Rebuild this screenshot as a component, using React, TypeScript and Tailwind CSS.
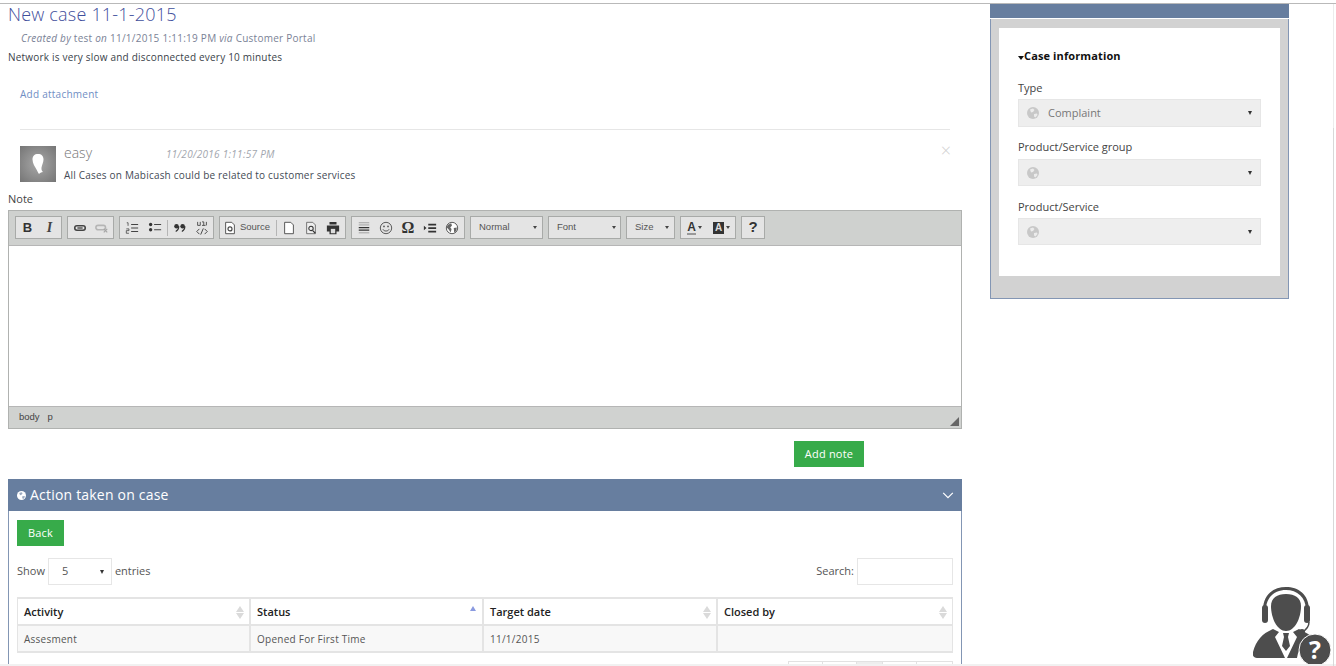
const font = "font-['Open_Sans',sans-serif]";

function Globe({ className, detail = "#ffffff" }: { className: string; detail?: string }) {
  return (
    <svg viewBox="0 0 12 12" className={className}>
      <circle cx="6" cy="6" r="6" fill="currentColor" />
      <path d="M3 2.500 6 1.500 7.500 3 6 5 4 5.500 3.500 4ZM7 7 10 6.500 10.500 8 8.500 10.500 7 9.500Z" fill={detail} opacity="0.65" />
    </svg>
  );
}

function Caret() {
  return <span className="h-0 w-0 border-x-[2.5px] border-t-[4px] border-x-transparent border-t-[#333]" />;
}

function SortArrows({ up }: { up?: boolean }) {
  if (up) {
    return <span className="mr-[1px] mt-[-8px] h-0 w-0 border-x-[3.5px] border-b-[5px] border-x-transparent border-b-[#8a9ae0]" />;
  }
  return (
    <span className="flex flex-col gap-[1px]">
      <span className="h-0 w-0 border-x-[4px] border-b-[6px] border-x-transparent border-b-[#dadada]" />
      <span className="h-0 w-0 border-x-[4px] border-t-[6px] border-x-transparent border-t-[#dadada]" />
    </span>
  );
}

function Tool({ children, w = "w-[22px]" }: { children: React.ReactNode; w?: string }) {
  return <span className={`flex h-full items-center justify-center ${w}`}>{children}</span>;
}

function Sep() {
  return <span className="mx-[1px] h-[16px] w-px bg-[#b5b5b5]" />;
}

function Group({ children, w }: { children: React.ReactNode; w: string }) {
  return (
    <div className={`flex h-[23px] items-center justify-center border border-[#a8aaa8] bg-[#e4e4e4] ${w}`}>
      {children}
    </div>
  );
}

function Combo({ label, w, textW }: { label: string; w: string; textW: string }) {
  return (
    <div className={`flex h-[23px] items-center border border-[#a8aaa8] bg-[#e4e4e4] pl-[8px] font-['Liberation_Sans',sans-serif] text-[9.500px] text-[#555] ${w}`}>
      <span className={textW}>{label}</span>
      <span className="h-0 w-0 border-x-[2px] border-t-[3px] border-x-transparent border-t-[#444]" />
    </div>
  );
}

function Icon({ children }: { children: React.ReactNode }) {
  return (
    <svg viewBox="0 0 16 16" className="h-[14px] w-[14px]">
      {children}
    </svg>
  );
}

function Toolbar() {
  return (
    <div className="flex h-[35px] items-start gap-[5px] border-b border-[#b6b6b6] bg-[#cfd1cf] pl-[6px] pt-[5px]">
      <Group w="w-[47px]">
        <Tool><span className="font-['Liberation_Sans',sans-serif] text-[13px] font-bold text-[#333]">B</span></Tool>
        <Tool><span className="font-['Liberation_Serif',serif] text-[14px] font-bold italic text-[#444]">I</span></Tool>
      </Group>
      <Group w="w-[47px]">
        <Tool>
          <Icon><rect x="2" y="5.500" width="12" height="5" rx="2.500" fill="none" stroke="#444" strokeWidth="1.800" /><path d="M5 8h6" stroke="#444" strokeWidth="1.500" /></Icon>
        </Tool>
        <Tool>
          <Icon><rect x="1" y="5" width="11" height="5" rx="2.500" fill="none" stroke="#b5b5b5" strokeWidth="1.800" /><path d="M10 9l4 4M14 9l-4 4" stroke="#a5a5a5" strokeWidth="1.300" /></Icon>
        </Tool>
      </Group>
      <Group w="w-[95px]">
        <Tool>
          <Icon><path d="M7 4h8M7 8h8M7 12h8" stroke="#444" strokeWidth="1.300" /><path d="M2 2h1.500v3.500M1.500 9h3v2h-3v3h3" fill="none" stroke="#444" strokeWidth="0.900" /></Icon>
        </Tool>
        <span className="w-[1px]" />
        <Tool>
          <Icon><path d="M7 4h8M7 10h8" stroke="#444" strokeWidth="1.400" /><circle cx="3" cy="4" r="1.900" fill="#333" /><circle cx="3" cy="10" r="1.900" fill="#333" /></Icon>
        </Tool>
        <Sep />
        <Tool>
          <Icon><circle cx="4" cy="6" r="2.600" fill="#333" /><circle cx="11" cy="6" r="2.600" fill="#333" /><path d="M6.600 6c0 3-1.500 5-3.500 6M13.600 6c0 3-1.500 5-3.500 6" fill="none" stroke="#333" strokeWidth="1.300" /></Icon>
        </Tool>
        <Tool>
          <Icon><path d="M3 1v4h3V1M8 1h2v4M8 5h4M13 1v4" fill="none" stroke="#444" strokeWidth="1" /><path d="M5 9 2 12l3 3M11 9l3 3-3 3M9.500 8.500l-3 7" fill="none" stroke="#444" strokeWidth="1.100" /></Icon>
        </Tool>
      </Group>
      <Group w="w-[127px]">
        <Tool w="w-[19px]">
          <Icon><path d="M3 1.500h7l3 3v10H3Z" fill="#fff" stroke="#444" strokeWidth="1" /><circle cx="8" cy="9" r="2.300" fill="none" stroke="#444" strokeWidth="1.300" /></Icon>
        </Tool>
        <span className="mr-[5px] font-['Liberation_Sans',sans-serif] text-[9.500px] text-[#555]">Source</span>
        <Sep />
        <Tool>
          <Icon><path d="M3 1.500h7l3 3v10H3Z" fill="#fff" stroke="#444" strokeWidth="1" /></Icon>
        </Tool>
        <Tool>
          <Icon><path d="M3 1.500h7l3 3v10H3Z" fill="#eee" stroke="#666" strokeWidth="1" /><circle cx="8" cy="8.500" r="2.500" fill="none" stroke="#333" strokeWidth="1.200" /><path d="m10 11 3 3" stroke="#333" strokeWidth="1.400" /></Icon>
        </Tool>
        <Tool>
          <Icon><path d="M4 1h8v3H4ZM1 5h14v7h-3v3H4v-3H1Z" fill="#333" /><rect x="5.500" y="9" width="5" height="5" fill="#ddd" /></Icon>
        </Tool>
      </Group>
      <Group w="w-[114px]">
        <Tool>
          <Icon><path d="M2 2h12M2 4.500h12M2 13.500h12" stroke="#999" strokeWidth="1" /><path d="M2 7.500h12M2 10.500h12" stroke="#333" strokeWidth="1.300" /></Icon>
        </Tool>
        <Tool>
          <Icon><circle cx="8" cy="8" r="6.500" fill="none" stroke="#555" strokeWidth="1.100" /><circle cx="5.700" cy="6.200" r="1" fill="#555" /><circle cx="10.300" cy="6.200" r="1" fill="#555" /><path d="M4.500 9.500c1 2.600 6 2.600 7 0" fill="none" stroke="#555" strokeWidth="1.100" /></Icon>
        </Tool>
        <Tool><span className="font-['Liberation_Serif',serif] text-[16px] font-bold leading-none text-[#333]">Ω</span></Tool>
        <Tool>
          <Icon><path d="M6 3h9v2H6ZM6 7h9v2H6ZM6 11h9v2H6Z" fill="#333" /><path d="M1 5.500 4 8l-3 2.500Z" fill="#333" /></Icon>
        </Tool>
        <Tool>
          <Icon><circle cx="8" cy="8" r="6.500" fill="#fff" stroke="#555" strokeWidth="1.100" /><path d="M3 4.500 7 2.500 8 5 6 7.500 7.500 9 6.500 13 4 9.500 2 7.500ZM10 8l3.500-.5-.5 3.500-2.500 2.500Z" fill="#666" /></Icon>
        </Tool>
      </Group>
      <Combo label="Normal" w="w-[73px]" textW="w-[54px]" />
      <Combo label="Font" w="w-[73px]" textW="w-[55px]" />
      <Combo label="Size" w="w-[49px]" textW="w-[30px]" />
      <Group w="w-[56px]">
        <span className="flex w-[28px] items-center justify-center gap-[2px]">
          <span className="border-b-2 border-[#999] font-['Liberation_Sans',sans-serif] text-[12px] font-bold leading-[12px] text-[#333]">A</span>
          <span className="h-0 w-0 border-x-[2px] border-t-[3px] border-x-transparent border-t-[#444]" />
        </span>
        <span className="flex w-[28px] items-center justify-center gap-[2px]">
          <span className="flex h-[12px] w-[11px] items-center justify-center bg-[#333] font-['Liberation_Sans',sans-serif] text-[10px] font-bold text-[#ddd]">A</span>
          <span className="h-0 w-0 border-x-[2px] border-t-[3px] border-x-transparent border-t-[#444]" />
        </span>
      </Group>
      <Group w="w-[24px]">
        <span className="font-['Liberation_Sans',sans-serif] text-[15px] font-bold text-[#333]">?</span>
      </Group>
    </div>
  );
}

function CaseSelect({ label, value, mt, h, boxMt }: { label: string; value?: string; mt: string; h: string; boxMt: string }) {
  return (
    <div className={mt}>
      <p className="text-[11px] leading-[15px] text-[#444]">{label}</p>
      <div className={`flex items-center border border-[#e6e6e6] bg-[#eeeeee] pl-[8px] pr-[8px] ${boxMt} ${h}`}>
        <Globe className="h-[12px] w-[12px] text-[#c8c8c8]" />
        <span className="ml-[9px] flex-1 text-[11px] text-[#777]">{value}</span>
        <Caret />
      </div>
    </div>
  );
}

function AgentIcon() {
  return (
    <svg viewBox="0 0 82 80" className="absolute left-[1253px] top-[586px] h-[80px] w-[82px]">
      <path d="M10 24C10 8 21 1 33 1s23 7 23 23h-3C53 11 44 4 33 4S13 11 13 24Z" fill="#4d4d4d" />
      <rect x="9" y="19" width="6" height="18" rx="3" fill="#4d4d4d" />
      <rect x="51" y="19" width="6" height="18" rx="3" fill="#4d4d4d" />
      <path d="M56 36c0 5-3 8-7 10" fill="none" stroke="#4d4d4d" strokeWidth="1.500" />
      <circle cx="49" cy="46" r="3" fill="#4d4d4d" />
      <path d="M18 20c0-8 6-12 15-12s15 4 15 12c0 12-6 25-15 25S18 32 18 20Z" fill="#4d4d4d" />
      <path d="M20 43C10 47 3 54 0 66c-1 4 1 6 4 6h28L22 51l4-5Z" fill="#4d4d4d" />
      <path d="M46 43c5 3 10 5 14 8-8 3-14 9-16 21H34l10-21-4-5Z" fill="#4d4d4d" />
      <path d="M30 47h6l-1 4 2 9-4 5-4-5 2-9Z" fill="#4d4d4d" />
      <circle cx="62" cy="64" r="16" fill="#4d4d4d" stroke="#ffffff" strokeWidth="1" />
      <text x="62" y="73" textAnchor="middle" fontSize="25" fontWeight="700" fill="#ffffff" fontFamily="'Open Sans', sans-serif">?</text>
    </svg>
  );
}

export default function App() {
  return (
    <div className={`${font} relative h-[666px] w-[1336px] overflow-hidden bg-white`}>
      <div className="mt-[3px] h-px w-full bg-[#b9b9b9]" />
      <div className="flex">
        {/* Left column */}
        <div className="ml-[8px] w-[954px]">
          <h1 className="text-[18px] font-light leading-[20px] tracking-[0.2px] text-[#3f4f9c]">New case 11-1-2015</h1>
          <p className="ml-[13px] mt-[7px] text-[10px] leading-[14px] tracking-[0.25px] text-[#7a8296]">
            <span className="italic">Created by</span> test <span className="italic">on</span> 11/1/2015 1:11:19 PM <span className="italic">via</span> Customer Portal
          </p>
          <p className="mt-[5px] text-[10px] leading-[14px] tracking-[0.2px] text-[#3a3f4a]">Network is very slow and disconnected every 10 minutes</p>
          <p className="ml-[12px] mt-[23px] text-[10px] leading-[14px] tracking-[0.25px] text-[#6f8ec4]">Add attachment</p>
          <div className="ml-[12px] mr-[12px] mt-[28px] h-px bg-[#e6e6e6]" />
          <div className="relative ml-[12px] mt-[16px] flex">
            <div className="flex h-[36px] w-[36px] items-center justify-center bg-[radial-gradient(circle,#a8a8a8,#757575)]">
              <svg viewBox="0 0 12 20" className="h-[20px] w-[12px]">
                <path d="M6 0c3.500 0 5.500 2 5.500 5.500 0 3-1.500 5-2 8-.3 2 .5 3.500 1.500 4.500-2 0-3 1-4 2-1-1-1.500-3-2.500-4.500C3 12.500 .5 9.500 .5 5.500 .5 2 2.500 0 6 0Z" fill="#ffffff" />
              </svg>
            </div>
            <div className="ml-[8px] flex-1">
              <div className="flex items-baseline">
                <span className="w-[102px] text-[14px] font-light leading-[14px] text-[#777]">easy</span>
                <span className="text-[10px] italic leading-[14px] tracking-[0.28px] text-[#a2a6ae]">11/20/2016 1:11:57 PM</span>
              </div>
              <p className="mt-[7px] text-[10px] leading-[14px] tracking-[0.2px] text-[#444a55]">All Cases on Mabicash could be related to customer services</p>
            </div>
            <span className="mr-[11px] text-[18px] font-light leading-[9px] text-[#d0d0d0]">×</span>
          </div>
          <p className="mt-[9px] text-[11px] leading-[16px] text-[#444]">Note</p>
          <div className="mt-[3px] h-[219px] border border-[#b0b2b0]">
            <Toolbar />
            <div className="h-[160px] bg-white" />
            <div className="relative flex h-[22px] items-center border-t border-[#b6b6b6] bg-[#d0d2d0] pl-[10px] font-['Liberation_Sans',sans-serif] text-[9.500px] text-[#444]">
              <span>body</span>
              <span className="ml-[8px]">p</span>
              <span className="absolute bottom-[2px] right-[2px] h-0 w-0 border-b-[9px] border-l-[9px] border-b-[#666] border-l-transparent" />
            </div>
          </div>
          <div className="mt-[12px] flex justify-end pr-[98px]">
            <button className="h-[26px] w-[70px] bg-[#37ab4a] text-[11px] font-medium tracking-[0.2px] text-white">Add note</button>
          </div>
          {/* Action panel */}
          <div className="mt-[12px] border-x border-[#8396b4]">
            <div className="-mx-px flex h-[32px] items-center bg-[#677e9f] pl-[9px] pr-[8px] text-white">
              <Globe className="h-[9px] w-[9px] text-white" detail="#677e9f" />
              <span className="ml-[4px] flex-1 text-[14px] leading-[32px] tracking-[0.2px]">Action taken on case</span>
              <svg viewBox="0 0 12 8" className="h-[7px] w-[12px]">
                <path d="M.5 1 6 6.500 11.500 1" fill="none" stroke="#ffffff" strokeWidth="1.400" />
              </svg>
            </div>
            <div className="pl-[8px] pr-[8px]">
              <button className="mt-[9px] block h-[26px] w-[47px] bg-[#37ab4a] text-[11px] font-medium tracking-[0.2px] text-white">Back</button>
              <div className="mt-[12px] flex h-[27px] items-center text-[11px] text-[#555]">
                <span>Show</span>
                <div className="ml-[3px] flex h-[27px] w-[64px] items-center border border-[#e6e6e6] pl-[13px] pr-[7px] text-[#555]">
                  <span className="flex-1">5</span>
                  <Caret />
                </div>
                <span className="ml-[3px] flex-1">entries</span>
                <span>Search:</span>
                <div className="ml-[3px] h-[27px] w-[96px] border border-[#e6e6e6]" />
              </div>
              <div className="mt-[12px] grid grid-cols-[233px_233px_234px_1fr] border-x border-t-2 border-[#e4e4e4] text-[11px]">
                {[
                  { label: "Activity" },
                  { label: "Status", up: true },
                  { label: "Target date" },
                  { label: "Closed by" },
                ].map((c, i) => (
                  <div key={c.label} className={`flex h-[27px] items-center justify-between border-b-2 border-[#e4e4e4] pl-[6px] pr-[5px] pt-[1px] font-semibold text-[#222] ${i < 3 ? "border-r-2" : ""}`}>
                    <span>{c.label}</span>
                    <SortArrows up={c.up} />
                  </div>
                ))}
                {["Assesment", "Opened For First Time", "11/1/2015", ""].map((c, i) => (
                  <div key={i} className={`flex h-[27px] items-center border-b-2 border-[#e4e4e4] bg-[#f8f8f8] pl-[6px] pt-[1px] text-[10px] tracking-[0.25px] text-[#555] ${i < 3 ? "border-r-2" : ""}`}>
                    {c}
                  </div>
                ))}
              </div>
              <div className="ml-[771px] mt-[8px] flex h-[10px] w-[165px] border border-[#e2e2e2]">
                <span className="w-[34px] border-r border-[#e2e2e2]" />
                <span className="w-[34px] border-r border-[#e2e2e2]" />
                <span className="w-[26px] border-r border-[#e2e2e2] bg-[#eeeeee]" />
                <span className="w-[34px] border-r border-[#e2e2e2]" />
              </div>
            </div>
          </div>
        </div>

        {/* Right column */}
        <div className="ml-[28px] h-[295px] w-[299px] border-x border-b border-[#8396b4] bg-[#d2d2d2]">
          <div className="-mx-px h-[15px] border-b border-white bg-[#677e9f]" />
          <div className="ml-[8px] mt-[9px] h-[248px] w-[281px] bg-white px-[19px] pt-[20px]">
            <div className="flex items-center">
              <span className="mt-[4px] h-0 w-0 border-x-[3px] border-t-[4px] border-x-transparent border-t-[#111]" />
              <span className="text-[11px] font-bold leading-[15px] tracking-[0.12px] text-[#111]">Case information</span>
            </div>
            <CaseSelect label="Type" value="Complaint" mt="mt-[17px]" h="h-[28px]" boxMt="mt-[4px]" />
            <CaseSelect label="Product/Service group" mt="mt-[12px]" h="h-[27px]" boxMt="mt-[5px]" />
            <CaseSelect label="Product/Service" mt="mt-[13px]" h="h-[27px]" boxMt="mt-[4px]" />
          </div>
        </div>
      </div>

      <AgentIcon />
      {/* Scrollbars */}
      <div className="absolute bottom-0 left-0 h-[2px] w-full bg-[#f1f1f1]" />
      <div className="absolute bottom-0 right-[2px] top-[128px] w-px bg-[#d8d8d8]" />
      <div className="absolute right-[2px] top-[4px] h-[124px] w-px bg-[#ececec]" />
    </div>
  );
}
